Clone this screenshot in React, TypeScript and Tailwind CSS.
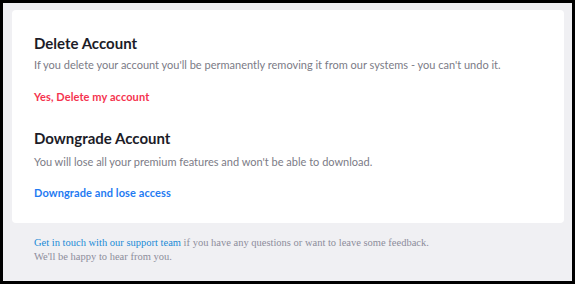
export default function App() {
  return (
    <div className="h-[284px] w-[575px] border-[3px] border-black bg-[#f0f0f3] pt-[7px] pl-[9px] pr-[8px]">
      {/* Card */}
      <div className="h-[213px] rounded-[4px] bg-white px-[22px] pt-[23px] font-['Lato',sans-serif]">
        <section>
          <h2 className="text-[15px] font-bold leading-[20px] text-[#1c1c28]">Delete Account</h2>
          <p className="mt-[3px] text-[11px] leading-[18px] text-[#7b7b86]">
            If you delete your account you'll be permanently removing it from our systems - you can't undo it.
          </p>
          <a href="#" className="mt-[14px] block text-[11px] font-bold leading-[18px] tracking-[0.1px] text-[#f5334f]">
            Yes, Delete my account
          </a>
        </section>
        <section className="mt-[22px]">
          <h2 className="text-[15px] font-bold leading-[20px] text-[#1c1c28]">Downgrade Account</h2>
          <p className="mt-[5px] text-[11px] leading-[18px] text-[#7b7b86]">
            You will lose all your premium features and won't be able to download.
          </p>
          <a href="#" className="mt-[13px] block text-[11px] font-bold leading-[18px] tracking-[0.1px] text-[#1f7bf2]">
            Downgrade and lose access
          </a>
        </section>
      </div>

      {/* Footer note */}
      <p className="mt-[13px] pl-[22px] font-['Liberation_Serif',serif] text-[10.5px] leading-[14px] text-[#8d8d9b]">
        <a href="#" className="text-[#1b8bd6]">Get in touch with our support team</a> if you have any questions or want to leave some feedback.
        <br />
        We'll be happy to hear from you.
      </p>
    </div>
  );
}
